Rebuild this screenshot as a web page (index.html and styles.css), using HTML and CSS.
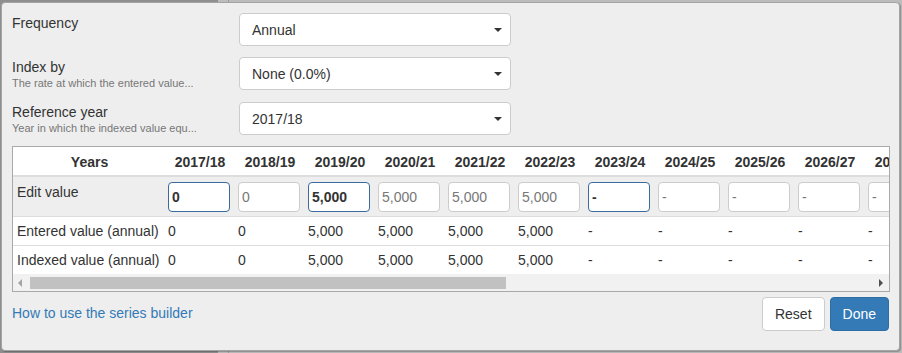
FILE: index.html
```html
<!DOCTYPE html>
<html lang="en">
  <head>
    <meta charset="UTF-8" />
    <title>Series builder</title>
    <link rel="stylesheet" href="styles.css">
  </head>
  <body>
    <div class="dialog">
      <div class="field">
        <div class="field-label">
          <div class="label-title">Frequency</div>
        </div>
        <div class="select-wrap">
          <select class="form-select"><option>Annual</option></select>
        </div>
      </div>
      <div class="field">
        <div class="field-label">
          <div class="label-title">Index by</div>
          <div class="label-help">The rate at which the entered value...</div>
        </div>
        <div class="select-wrap">
          <select class="form-select"><option>None (0.0%)</option></select>
        </div>
      </div>
      <div class="field">
        <div class="field-label">
          <div class="label-title">Reference year</div>
          <div class="label-help">Year in which the indexed value equ...</div>
        </div>
        <div class="select-wrap">
          <select class="form-select"><option>2017/18</option></select>
        </div>
      </div>

      <div class="series-box">
        <div class="series-scroll">
          <table class="series-table">
            <thead>
              <tr>
                <th class="row-head">Years</th>
                <th>2017/18</th>
                <th>2018/19</th>
                <th>2019/20</th>
                <th>2020/21</th>
                <th>2021/22</th>
                <th>2022/23</th>
                <th>2023/24</th>
                <th>2024/25</th>
                <th>2025/26</th>
                <th>2026/27</th>
                <th>2027/28</th>
              </tr>
            </thead>
            <tbody>
              <tr class="edit-row">
                <td class="row-head">Edit value</td>
                <td><input class="value-input set" value="0"></td>
                <td><input class="value-input" value="0"></td>
                <td><input class="value-input set" value="5,000"></td>
                <td><input class="value-input" value="5,000"></td>
                <td><input class="value-input" value="5,000"></td>
                <td><input class="value-input" value="5,000"></td>
                <td><input class="value-input set" value="-"></td>
                <td><input class="value-input" value="-"></td>
                <td><input class="value-input" value="-"></td>
                <td><input class="value-input" value="-"></td>
                <td><input class="value-input" value="-"></td>
              </tr>
              <tr>
                <td class="row-head">Entered value (annual)</td>
                <td>0</td>
                <td>0</td>
                <td>5,000</td>
                <td>5,000</td>
                <td>5,000</td>
                <td>5,000</td>
                <td>-</td>
                <td>-</td>
                <td>-</td>
                <td>-</td>
                <td>-</td>
              </tr>
              <tr>
                <td class="row-head">Indexed value (annual)</td>
                <td>0</td>
                <td>0</td>
                <td>5,000</td>
                <td>5,000</td>
                <td>5,000</td>
                <td>5,000</td>
                <td>-</td>
                <td>-</td>
                <td>-</td>
                <td>-</td>
                <td>-</td>
              </tr>
            </tbody>
          </table>
        </div>
        <div class="scrollbar">
          <span class="scroll-arrow left"></span>
          <div class="scroll-thumb"></div>
          <span class="scroll-space"></span>
          <span class="scroll-arrow right"></span>
        </div>
      </div>

      <div class="dialog-footer">
        <a class="help-link" href="#">How to use the series builder</a>
        <div class="buttons">
          <button class="btn" type="button">Reset</button>
          <button class="btn btn-primary" type="button">Done</button>
        </div>
      </div>
    </div>
  </body>
</html>
```

FILE: styles.css
```css
html,
body {
  margin: 0;
  height: 353px;
  overflow: hidden;
}
body {
  font-family: "Liberation Sans", Arial, Helvetica, sans-serif;
  font-size: 14px;
  line-height: 20px;
  color: #333;
  background: linear-gradient(
    to right,
    #8e8e8e 0,
    #8e8e8e 218px,
    #bcbcbc 218px,
    #bcbcbc 228px,
    #9c9c9c 228px,
    #9c9c9c 229px,
    #bcbcbc 229px
  );
}
.dialog {
  box-sizing: border-box;
  width: 899px;
  height: 349px;
  margin: 2px 0 0 1px;
  padding: 10px 9px 0 10px;
  background-color: #eeeeee;
  border: 1px solid #a4a4a4;
  border-radius: 4px;
  box-shadow: 1px 1px 1px rgba(0, 0, 0, 0.25);
}

/* form rows */
.field {
  display: flex;
  height: 33px;
  margin-bottom: 11px;
}
.field:nth-child(3) {
  margin-top: 12px;
}
.field-label {
  width: 227px;
}
.label-title {
  line-height: 20px;
}
.label-help {
  font-size: 11px;
  line-height: 13px;
  color: #777;
}
.select-wrap {
  position: relative;
  width: 272px;
}
.select-wrap::after {
  content: "";
  position: absolute;
  right: 9px;
  top: 15px;
  border-top: 4px solid #333;
  border-left: 4px solid transparent;
  border-right: 4px solid transparent;
}
.form-select {
  appearance: none;
  -webkit-appearance: none;
  box-sizing: border-box;
  width: 272px;
  height: 33px;
  padding: 0 12px;
  font-family: inherit;
  font-size: 14px;
  color: #333;
  background-color: #fff;
  border: 1px solid #ccc;
  border-radius: 4px;
}

/* years table */
.series-box {
  margin-top: 11px;
  width: 878px;
  box-sizing: border-box;
  border: 1px solid #a9a9a9;
  background-color: #fff;
}
.series-scroll {
  overflow: hidden;
}
.series-table {
  table-layout: fixed;
  width: 922px;
  border-collapse: separate;
  border-spacing: 0;
}
.series-table th,
.series-table td {
  width: 64px;
  padding: 4px 3px;
  line-height: 20px;
  white-space: nowrap;
  text-align: left;
  vertical-align: top;
}
.series-table th {
  padding: 5px 3px 3px;
  font-weight: bold;
  text-align: center;
  border-bottom: 2px solid #dddddd;
}
.series-table .row-head {
  width: 145px;
  padding-left: 4px;
}
.series-table th.row-head {
  text-align: center;
}
.series-table tbody tr + tr td {
  border-top: 1px solid #dddddd;
}
.edit-row td {
  background-color: #eeeeee;
  padding-top: 5px;
}
.value-input {
  box-sizing: border-box;
  width: 62px;
  height: 30px;
  padding: 0 3px;
  font-family: inherit;
  font-size: 14px;
  color: #777;
  background-color: #fff;
  border: 1px solid #cccccc;
  border-radius: 4px;
  outline: none;
}
.value-input.set {
  color: #333;
  font-weight: bold;
  border-color: #3a6b9c;
}

/* scrollbar under the table */
.scrollbar {
  display: flex;
  align-items: center;
  height: 17px;
  background-color: #f1f1f1;
}
.scroll-arrow {
  width: 17px;
  height: 17px;
  position: relative;
}
.scroll-arrow::after {
  content: "";
  position: absolute;
  top: 5px;
  border-top: 4px solid transparent;
  border-bottom: 4px solid transparent;
}
.scroll-arrow.left::after {
  left: 5px;
  border-right: 4px solid #a3a3a3;
}
.scroll-arrow.right::after {
  right: 6px;
  border-left: 4px solid #505050;
}
.scroll-thumb {
  width: 476px;
  height: 12px;
  background-color: #c1c1c1;
}
.scroll-space {
  flex: 1;
}

/* footer */
.dialog-footer {
  display: flex;
  align-items: center;
  justify-content: space-between;
  margin-top: 5px;
  width: 877px;
}
.help-link {
  color: #337ab7;
  text-decoration: none;
  margin-top: -3px;
}
.buttons {
  display: flex;
  gap: 5px;
}
.btn {
  height: 34px;
  padding: 6px 12px;
  font-family: inherit;
  font-size: 14px;
  line-height: 20px;
  color: #333;
  background-color: #fff;
  border: 1px solid #ccc;
  border-radius: 4px;
}
.btn-primary {
  color: #fff;
  background-color: #337ab7;
  border-color: #2e6da4;
}
```
